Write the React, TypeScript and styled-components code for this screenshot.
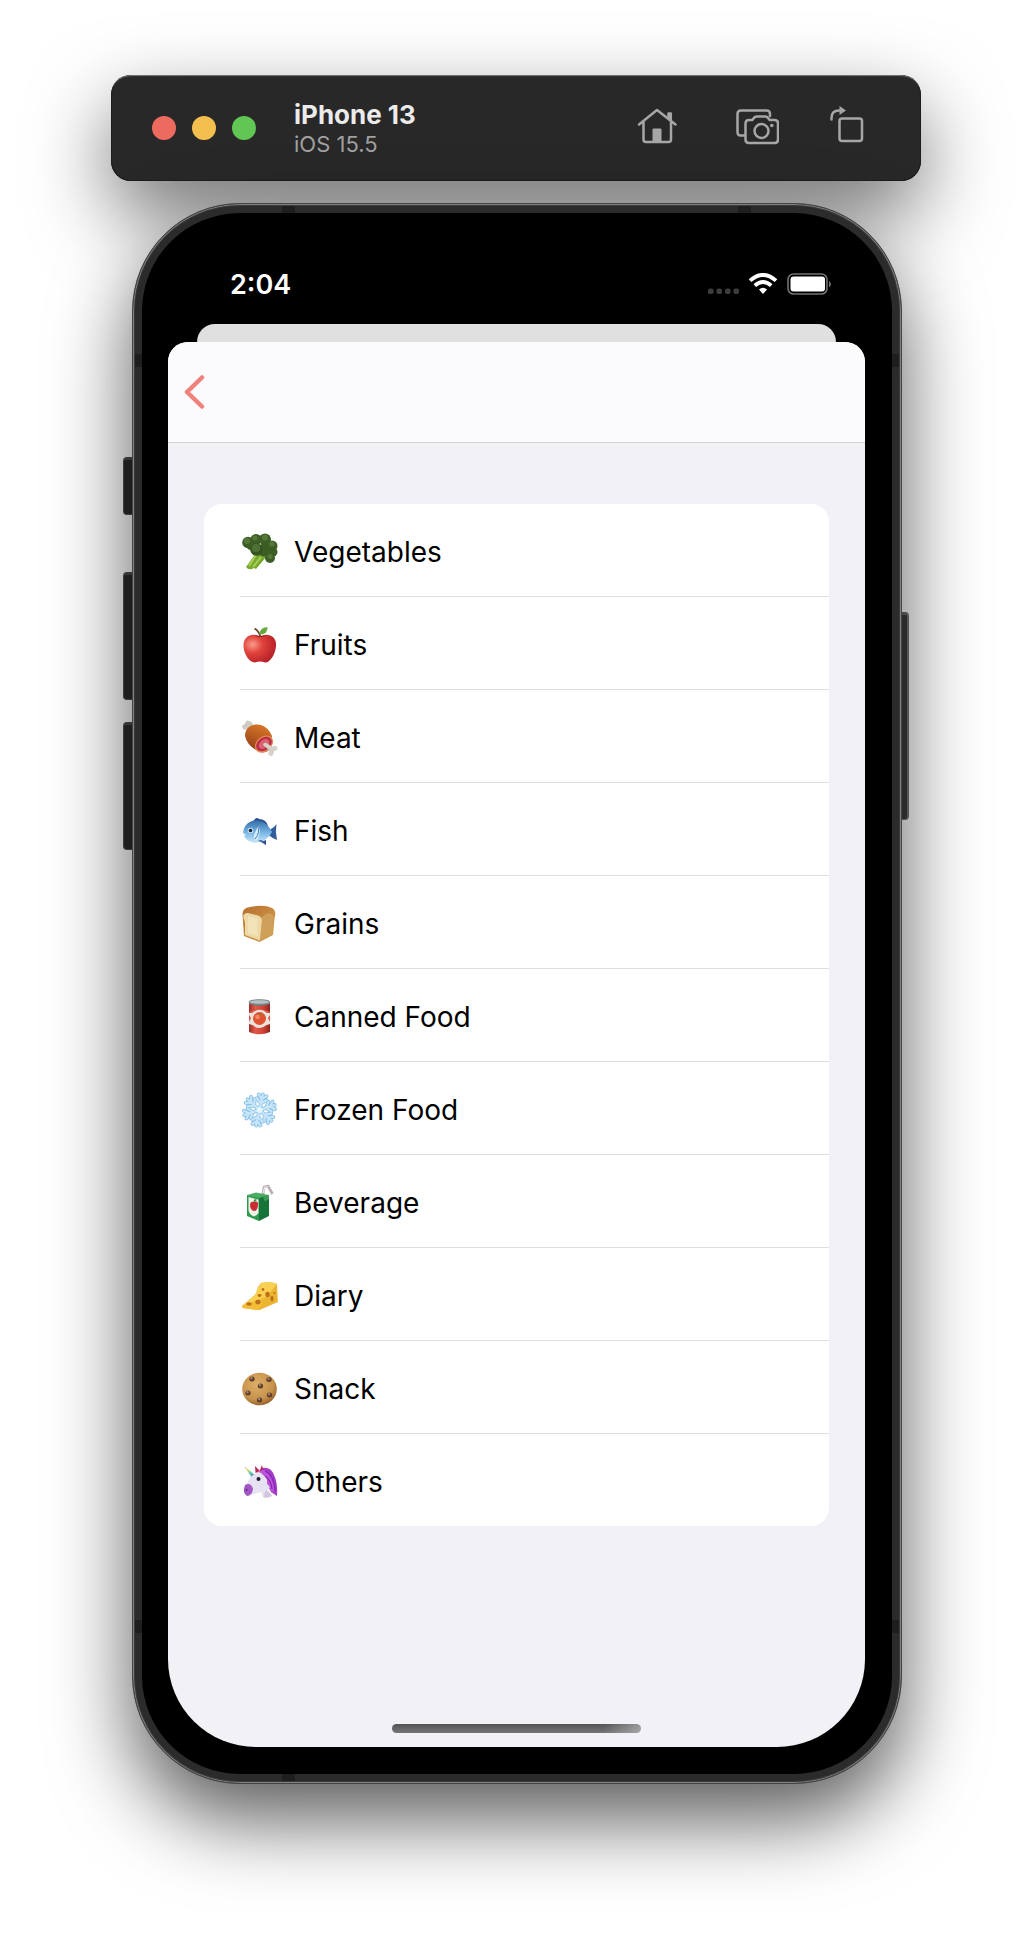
import React from "react";
import styled, { createGlobalStyle, css } from "styled-components";

const GlobalStyle = createGlobalStyle`
  * { box-sizing: border-box; }
  body { margin: 0; background: #fff; overflow-x: hidden; font-family: Inter, Roboto, sans-serif; }
`;

const Desktop = styled.main`
  display: flex;
  flex-direction: column;
  align-items: center;
  gap: 22px;
  padding: 75px 24px 151px;
`;

const Toolbar = styled.header`
  display: flex;
  align-items: center;
  width: 100%;
  max-width: 810px;
  height: 106px;
  padding: 0 57px 0 41px;
  border-radius: 20px;
  background: #282828;
  box-shadow: inset 0 2px 1px -1px #7a7a7a, inset 0 0 0 1px #1c1c1c, 0 32px 80px rgba(0, 0, 0, 0.55);
`;

const Lights = styled.div`
  display: flex;
  gap: 16px;
`;

const Light = styled.button<{ $color: string }>`
  width: 24px;
  height: 24px;
  padding: 0;
  border: 0;
  border-radius: 50%;
  background: ${(p) => p.$color};
`;

const Titles = styled.div`
  flex: 1;
  margin-left: 38px;
`;

const Title = styled.h1`
  margin: 0;
  color: #ebebeb;
  font-size: 26px;
  line-height: 32px;
  font-weight: 700;
`;

const Subtitle = styled.p`
  margin: 0;
  color: #a0a0a0;
  font-size: 22px;
  line-height: 26px;
`;

const Tools = styled.div`
  display: flex;
  gap: 51px;
  padding-bottom: 4px;
`;

const Tool = styled.button`
  display: flex;
  padding: 0;
  border: 0;
  background: none;
  color: #a6a6a6;
`;

const Device = styled.div`
  position: relative;
  z-index: 1;
  display: flex;
  justify-content: center;
  width: 100%;
  max-width: 786px;
`;

const Keys = styled.div<{ $side: "left" | "right" }>`
  flex: none;
  display: flex;
  flex-direction: column;
  width: ${(p) => (p.$side === "left" ? 9 : 7)}px;
  padding-top: ${(p) => (p.$side === "left" ? 254 : 409)}px;
`;

const Key = styled.span<{ $height: number; $gap?: number; $side: "left" | "right" }>`
  height: ${(p) => p.$height}px;
  margin-bottom: ${(p) => p.$gap ?? 0}px;
  background: #2b2b2b;
  border: 1px solid #555;
  border-top: 3px solid #4c4c4c;
  ${(p) =>
    p.$side === "left"
      ? css`border-right: 0; border-radius: 4px 0 0 4px;`
      : css`border-left: 0; border-right-width: 2px; border-radius: 0 4px 4px 0;`}
`;

const band = "linear-gradient(#1e1e1e, #1e1e1e)";

const Frame = styled.section`
  flex: 1;
  min-width: 0;
  padding: 9px;
  border: 1px solid #444;
  border-radius: 108px;
  background:
    ${band} 149px 0 / 13px 10px no-repeat,
    ${band} 605px 0 / 13px 10px no-repeat,
    ${band} 149px 100% / 13px 10px no-repeat,
    ${band} 0 150px / 100% 13px no-repeat,
    ${band} 0 calc(100% - 150px) / 100% 13px no-repeat,
    #2b2b2b;
  background-origin: padding-box;
  background-clip: border-box;
  box-shadow: inset 0 0 0 1px #808080, inset 0 0 0 2px #3a3a3a, 0 36px 80px rgba(0, 0, 0, 0.64);
`;

const Bezel = styled.div`
  padding: 0 27px 27px 26px;
  border-radius: 98px;
  background: #000;
`;

const StatusBar = styled.div`
  display: flex;
  align-items: center;
  justify-content: space-between;
  height: 111px;
  padding: 33px 32px 0 62px;
`;

const Clock = styled.time`
  color: #fff;
  font-size: 27px;
  line-height: 32px;
  font-weight: 600;
`;

const BackSheet = styled.div`
  height: 18px;
  margin: 0 29px;
  border-radius: 18px 18px 0 0;
  background: #e0e0e0;
`;

const Sheet = styled.div`
  display: flex;
  flex-direction: column;
  overflow: hidden;
  border-radius: 20px 20px 88px 88px;
  background: #f2f1f6;
`;

const NavBar = styled.nav`
  display: flex;
  align-items: center;
  height: 101px;
  padding-left: 15px;
  border-bottom: 1px solid #d2d2d5;
  background: #fbfbfd;
`;

const BackButton = styled.button`
  display: flex;
  padding: 0;
  border: 0;
  background: none;
`;

const List = styled.ul`
  margin: 61px 36px 198px;
  padding: 0;
  border-radius: 18px;
  background: #fff;
  list-style: none;
`;

const Item = styled.li`
  padding-left: 36px;
  & + & > button { border-top: 1px solid #dedee0; }
`;

const RowButton = styled.button`
  box-sizing: content-box;
  display: flex;
  align-items: center;
  gap: 16px;
  width: 100%;
  height: 89px;
  padding: 3px 0 0;
  border: 0;
  background: none;
  color: #000;
  font-family: inherit;
  font-size: 28px;
  line-height: 36px;
  text-align: left;
`;

const HomeIndicator = styled.div`
  align-self: center;
  width: 249px;
  height: 9px;
  margin-bottom: 14px;
  border-radius: 5px;
  background: linear-gradient(100deg, transparent 85%, rgba(200, 200, 200, 0.6)), linear-gradient(#545456, #757577);
`;

const HomeIcon = () => (
  <svg width="47" height="40" viewBox="0 0 47 40" fill="none" stroke="currentColor" strokeWidth="2.5" strokeLinecap="round" strokeLinejoin="round">
    <path d="M2 18.5 20 4 38.500 18.500M6.500 16V33.500Q6.500 36 9 36H31.500Q34 36 34 33.500V16" />
    <path d="M31.500 12V7.500H33.800V14" />
    <path d="M15.500 35.500V23.500Q15.500 22.500 16.500 22.500H23.500Q24.500 22.500 24.500 23.500V35.500Z" fill="currentColor" stroke="none" />
  </svg>
);

const ScreenshotIcon = () => (
  <svg width="44" height="40" viewBox="0 0 44 40" fill="none" stroke="currentColor" strokeWidth="2.500" strokeLinejoin="round" strokeLinecap="round">
    <path d="M9 29.500H5.500Q2.500 29.500 2.500 26V8Q2.500 4.500 6 4.500H31.500Q35 4.500 35 8V10" />
    <path d="M14 14H17.500Q19.500 10.500 21.500 10.500H30.500Q32.500 10.500 34.500 14H39.500Q43 14 43 17.500V33.500Q43 37 39.500 37H14Q10.500 37 10.500 33.500V17.500Q10.500 14 14 14Z" />
    <circle cx="26.500" cy="25" r="7" />
    <circle cx="36.800" cy="19.500" r="1.800" fill="currentColor" stroke="none" />
  </svg>
);

const RotateIcon = () => (
  <svg width="34" height="40" viewBox="0 0 34 40" fill="none" stroke="currentColor" strokeWidth="2.500" strokeLinecap="round">
    <rect x="9.500" y="12.500" width="22.500" height="22.500" rx="2.500" />
    <path d="M1.500 13.500V12Q1.500 4.500 9 4.500H10" />
    <path d="M9.500 0 16 4.500 9.500 9Z" fill="currentColor" stroke="none" />
  </svg>
);

const StatusIcons = () => (
  <svg width="126" height="24" viewBox="0 1 126 24" role="img" aria-label="Wi-Fi on, battery full">
    <g fill="#3c3c3c">
      {[1, 9.5, 18, 26.5].map((x) => (
        <rect key={x} x={x} y="16.500" width="5.500" height="5.500" rx="1.800" />
      ))}
    </g>
    <g transform="translate(41.500 1)">
      <path d="M14.500 21 18.500 16.500Q14.500 12.800 10.500 16.500Z" fill="#fff" />
      <path d="M6.300 12.600Q14.500 5.500 22.700 12.600" fill="none" stroke="#fff" strokeWidth="3.800" />
      <path d="M1.500 7.600Q14.500-3.800 27.500 7.600" fill="none" stroke="#fff" strokeWidth="3.800" />
    </g>
    <rect x="81" y="2" width="39" height="20" rx="5.500" fill="none" stroke="#727272" strokeWidth="1.600" />
    <rect x="83.500" y="4.500" width="34.500" height="15" rx="3" fill="#fff" />
    <path d="M122 9V15.500Q126 12.500 122 9Z" fill="#727272" />
  </svg>
);

const Picture = ({ children }: { children: React.ReactNode }) => (
  <svg width="38" height="38" viewBox="-1 0 38 38" overflow="visible" aria-hidden="true">
    {children}
  </svg>
);

const Broccoli = () => (
  <Picture>
    <path d="M15 20 5 34Q8 38 13 35L15 36 26 23Z" fill="#78a82d" />
    <path d="M15 22 8 33M20 24 12 34" stroke="#a9d358" strokeWidth="1.800" />
    <g fill="#3c5e25">
      <circle cx="7" cy="9.500" r="5.800" /><circle cx="15" cy="6.500" r="5.500" /><circle cx="24" cy="6.500" r="6" />
      <circle cx="31" cy="13" r="5.500" /><circle cx="32" cy="19" r="4.500" /><circle cx="29" cy="25" r="5" />
      <circle cx="23" cy="17" r="6.500" /><circle cx="28" cy="19" r="5" /><circle cx="10" cy="13" r="4" />
    </g>
    <g fill="#55783a">
      <circle cx="6" cy="8" r="3" /><circle cx="14" cy="5" r="2.600" /><circle cx="24" cy="4.500" r="3" />
      <circle cx="31" cy="11" r="2.600" /><circle cx="29" cy="23.500" r="2.500" />
    </g>
    <circle cx="15.500" cy="16.500" r="6.300" fill="#36541f" />
    <circle cx="15" cy="15" r="4.300" fill="#4d7034" />
  </Picture>
);

const Apple = () => (
  <Picture>
    <defs>
      <radialGradient id="apple" cx=".28" cy=".35" r=".75">
        <stop offset="0" stopColor="#fa9c8d" /><stop offset=".4" stopColor="#e2443d" /><stop offset="1" stopColor="#b51f26" />
      </radialGradient>
    </defs>
    <path d="M19 11C26 6 36 10 35 20C34.500 28 29 37 24 36.500Q19 34.500 14 36.500C8 36.500 2.500 27 2.500 20C2 10 12 6 19 11Z" fill="url(#apple)" />
    <path d="M14 9.500Q19 12.500 25 9.500Q19 10 14 9.500Z" fill="#8f1720" />
    <path d="M19.500 11Q18 5 13.500 2.500" fill="none" stroke="#70432e" strokeWidth="1.800" />
    <path d="M18.500 8.500Q18 2 26.500 1Q27 8.500 18.500 8.500Z" fill="#68a83b" />
  </Picture>
);

const Meat = () => (
  <Picture>
    <defs>
      <linearGradient id="meat" x1=".6" y1="0" x2=".2" y2="1">
        <stop offset="0" stopColor="#d87526" /><stop offset="1" stopColor="#8d3b17" />
      </linearGradient>
    </defs>
    <path d="M10 10 6 10Q3 12 1.500 9Q0 6 4 5Q5 0 8.500 2Q12 3 12 7Z" fill="#d0cbc3" />
    <path d="M4 17C4 8 12 4 20 6Q27 8 31 17L28 31Q22 36 15 31Q6 26 4 17Z" fill="url(#meat)" />
    <ellipse cx="23" cy="25" rx="10" ry="7.500" transform="rotate(-40 23 25)" fill="#e58a57" />
    <ellipse cx="23" cy="25" rx="8.700" ry="6.200" transform="rotate(-40 23 25)" fill="#b92f45" />
    <ellipse cx="23" cy="25" rx="6" ry="4" transform="rotate(-40 23 25)" fill="#dc6472" />
    <path d="M22 26Q23 22 27 25L31 27.500Q36 25.500 36.500 29Q37 31 33 32Q33 37 29.500 37Q26 36 28 31Z" fill="#d6d1c9" />
  </Picture>
);

const Fish = () => (
  <Picture>
    <defs>
      <linearGradient id="fish" x1="0" y1="0" x2="0" y2="1">
        <stop offset="0" stopColor="#326ba8" /><stop offset=".55" stopColor="#79b8e7" /><stop offset="1" stopColor="#d0e8f7" />
      </linearGradient>
    </defs>
    <path d="M12 10Q15 4 18 7Q25 7 27 14ZM20 30 25 33 25 28Z" fill="#294f8c" />
    <path d="M26 19Q33 16 35.500 12Q34 20 36 28Q31 26 26 22Z" fill="#315f9d" />
    <path d="M2.500 18C5 10 12 7.500 18 8.500Q26 10 31 20Q25 31 13 31Q5 29 3 24L5 23L2 21Z" fill="url(#fish)" />
    <path d="M17 14Q21 19 16 28Q12 28 13 23Z" fill="#d7ecfa" />
    <path d="M16 13Q20 20 14 27" fill="none" stroke="#467fb9" />
    <path d="M17 29Q21 26 24 31Z" fill="#3868a7" />
    <circle cx="9.500" cy="18.500" r="2.800" fill="#c9e2f2" /><circle cx="9.500" cy="18.500" r="1.800" fill="#172536" />
  </Picture>
);

const Bread = () => (
  <Picture>
    <defs>
      <linearGradient id="crust" x1="0" y1="0" x2="1" y2="1">
        <stop offset="0" stopColor="#b66f2d" /><stop offset="1" stopColor="#d7a150" />
      </linearGradient>
    </defs>
    <path d="M1.500 9Q1.500 3 9 2Q23-1 31 3Q36 6 33.500 13L32 30 18.500 37 3 31Z" fill="url(#crust)" />
    <path d="M20 13Q27 6 32 10Q33.500 13 32 16L31 29 18.500 35.500Z" fill="#cfa059" />
    <path d="M2.500 13Q1.500 8 7 8L17 10.500Q22 12 20.500 19L18.800 35.500 4 30 4 18Z" fill="#ecd9a6" />
    <path d="M7 11 16 13 16.500 31 7 28Z" fill="#f2e3b8" />
  </Picture>
);

const Can = () => (
  <Picture>
    <defs>
      <linearGradient id="can" x1="0" y1="0" x2="1" y2="0">
        <stop offset="0" stopColor="#9e2c26" /><stop offset=".3" stopColor="#e05a49" /><stop offset=".7" stopColor="#ce4134" /><stop offset="1" stopColor="#8d241e" />
      </linearGradient>
    </defs>
    <path d="M8 4H29V34Q18.500 38.500 8 34Z" fill="url(#can)" />
    <path d="M8 14Q18.500 8 29 14V26Q18.500 31 8 26Z" fill="#d65544" />
    <path d="M8 15 11 15Q18.500 8.500 26 15L29 15V17L27 20 29 24V26L25.500 27Q18.500 33 11.500 27L8 26V24L10 20 8 17Z" fill="#ebe3dc" />
    <circle cx="18.500" cy="20.500" r="6.500" fill="#de5433" />
    <circle cx="16.500" cy="19" r="2.300" fill="#f18b60" />
    <path d="M15.500 15 18.500 16 21.500 14 19.500 17Z" fill="#61863a" />
    <path d="M8 4Q18.500 8.500 29 4V6Q18.500 10 8 6Z" fill="#6d777b" />
    <ellipse cx="18.500" cy="4" rx="10.500" ry="2.300" fill="#b8c0c3" stroke="#7b8589" />
  </Picture>
);

const Snowflake = () => (
  <Picture>
    {["#86bfe8", "#c6e5f9"].map((color, i) => (
      <g key={color} fill="none" stroke={color} strokeWidth={i ? 2.2 : 3.8} strokeLinecap="round">
        {[12, 72, 132, 192, 252, 312].map((angle) => (
          <path key={angle} transform={`rotate(${angle} 18.5 19)`} d="M18.500 17V3M18.500 12 13.500 8M18.500 12 23.500 8M14.500 4 18.500 8 22.500 4" />
        ))}
      </g>
    ))}
    <circle cx="18.500" cy="19" r="3" fill="#e4f5ff" />
  </Picture>
);

const Juice = () => (
  <Picture>
    <path d="M22 10 23 3 27 2 31.500 10" fill="none" stroke="#b9aeb3" strokeWidth="2.600" strokeLinejoin="round" />
    <path d="M22.300 9 23.500 3.300 27 2.500" fill="none" stroke="#ece5e8" strokeWidth="1.200" />
    <path d="M6 11 15 8.500 28 11 18 15Z" fill="#4bac62" />
    <path d="M6 11 18 14V37L6 32Z" fill="#2c9b4d" />
    <path d="M18 14 28 11V32L18 37Z" fill="#16743a" />
    <path d="M22 13 28 11V15L24 17.500Z" fill="#3e9d57" />
    <path d="M7.500 13 17.500 15.500V29Q15 33 12 32Q8 30 7.500 26Z" fill="#eef2e8" />
    <path d="M12.500 18Q17.500 16 17 21Q16.500 27 13 27Q9 26 9 21Q9.500 17 12.500 18Z" fill="#c92c35" />
    <path d="M12.500 18Q12.500 15 15.500 15Q15.500 18 12.500 18Z" fill="#3d9441" />
  </Picture>
);

const Cheese = () => (
  <Picture>
    <path d="M1 29 15 17 17 10 20 6Q30 4 36 7L36.500 25 18 33 2 31Z" fill="#e7a52c" />
    <path d="M1 29 14 18 17 11 20 6Q30 4 36 7L25 21Z" fill="#f9d052" />
    <path d="M24 21 36 8 36.500 25 18 33Z" fill="#ebb532" />
    <path d="M1 29 24 20 18 33 2 31Z" fill="#f3bd35" />
    <g fill="#bd711b">
      <ellipse cx="17" cy="25" rx="2.700" ry="2.300" /><ellipse cx="8" cy="27" rx="2.800" ry="1.800" />
      <ellipse cx="26.500" cy="17.500" rx="2.200" ry="2.800" /><ellipse cx="31" cy="21.500" rx="1.600" ry="2.700" />
      <ellipse cx="18.500" cy="18.500" rx="2" ry="1.400" /><circle cx="33.500" cy="16" r="1.100" /><circle cx="22" cy="12.500" r="1.400" />
    </g>
  </Picture>
);

const Cookie = () => (
  <Picture>
    <defs>
      <radialGradient id="cookie" cx=".42" cy=".35" r=".68">
        <stop offset="0" stopColor="#dcae68" /><stop offset=".7" stopColor="#c7924b" /><stop offset="1" stopColor="#946029" />
      </radialGradient>
    </defs>
    <ellipse cx="18.500" cy="19" rx="17.300" ry="16.300" fill="url(#cookie)" />
    {[[11, 9], [28, 9.5], [19.500, 16], [7, 23], [28.5, 25], [18.500, 30]].map(([x, y]) => (
      <g key={`${x}-${y}`}>
        <ellipse cx={x} cy={y} rx="2.700" ry="2.500" fill="#62402a" />
        <circle cx={x - 0.5} cy={y - 0.8} r="1.100" fill="#a58b7c" />
      </g>
    ))}
  </Picture>
);

const Unicorn = () => (
  <Picture>
    <defs>
      <linearGradient id="horn" x1="0" y1="0" x2="1" y2="1">
        <stop offset="0" stopColor="#f4a184" /><stop offset=".3" stopColor="#e8d760" /><stop offset=".6" stopColor="#61c8b4" /><stop offset="1" stopColor="#5e72cb" />
      </linearGradient>
    </defs>
    <path d="M20 5Q30 3 33 12Q37 20 36 33L30 29 22 13Z" fill="#a43bc9" />
    <path d="M3 3 14 12 11 15Z" fill="url(#horn)" />
    <path d="M9 15Q15 8 23 10Q30 15 29 24L26 28 27 34Q23 36 21 32L20 29Q14 31 7 32Q2 30 5 22Z" fill="#e7e2f1" />
    <path d="M25 27Q30 30 31 33Q27 36 22 34Z" fill="#d2c5e0" />
    <path d="M4 22Q10 19 12 26Q11 33 6 33Q1 30 4 22Z" fill="#a256c5" />
    <path d="M14.500 10 14 3 19 8ZM18.500 8 21 2 23 11Z" fill="#b92c56" />
    <path d="M13 11Q19 7 22 12Q27 15 26 21Q29 23 31 30Q35 26 31 16Q28 7 21 7Z" fill="#bd55da" />
    <path d="M24 8Q33 12 34 28M24 13Q30 17 31 26" fill="none" stroke="#8426b5" strokeWidth="1.200" />
    <circle cx="17.500" cy="16" r="2" fill="#251b2d" />
    <ellipse cx="5.500" cy="27" rx=".8" ry="1.300" fill="#5d277a" />
  </Picture>
);

const categories: [string, React.ComponentType][] = [
  ["Vegetables", Broccoli],
  ["Fruits", Apple],
  ["Meat", Meat],
  ["Fish", Fish],
  ["Grains", Bread],
  ["Canned Food", Can],
  ["Frozen Food", Snowflake],
  ["Beverage", Juice],
  ["Diary", Cheese],
  ["Snack", Cookie],
  ["Others", Unicorn],
];

export default function App() {
  return (
    <>
      <GlobalStyle />
      <Desktop>
        <Toolbar>
          <Lights>
            <Light $color="#ed6a5f" aria-label="Close" />
            <Light $color="#f5bf4f" aria-label="Minimize" />
            <Light $color="#62c655" aria-label="Zoom" />
          </Lights>
          <Titles>
            <Title>iPhone 13</Title>
            <Subtitle>iOS 15.5</Subtitle>
          </Titles>
          <Tools>
            <Tool aria-label="Home"><HomeIcon /></Tool>
            <Tool aria-label="Screenshot"><ScreenshotIcon /></Tool>
            <Tool aria-label="Rotate"><RotateIcon /></Tool>
          </Tools>
        </Toolbar>
        <Device>
          <Keys $side="left">
            <Key $side="left" $height={58} $gap={57} />
            <Key $side="left" $height={128} $gap={22} />
            <Key $side="left" $height={128} />
          </Keys>
          <Frame>
            <Bezel>
              <StatusBar>
                <Clock>2:04</Clock>
                <StatusIcons />
              </StatusBar>
              <BackSheet />
              <Sheet>
                <NavBar>
                  <BackButton aria-label="Back">
                    <svg width="22" height="36" viewBox="0 0 22 36" fill="none" stroke="#f0827b" strokeWidth="4.500" strokeLinecap="round" strokeLinejoin="round">
                      <path d="M19 3.500 4 18 19 32.500" />
                    </svg>
                  </BackButton>
                </NavBar>
                <List>
                  {categories.map(([name, Icon]) => (
                    <Item key={name}>
                      <RowButton>
                        <Icon />
                        {name}
                      </RowButton>
                    </Item>
                  ))}
                </List>
                <HomeIndicator />
              </Sheet>
            </Bezel>
          </Frame>
          <Keys $side="right">
            <Key $side="right" $height={208} />
          </Keys>
        </Device>
      </Desktop>
    </>
  );
}
